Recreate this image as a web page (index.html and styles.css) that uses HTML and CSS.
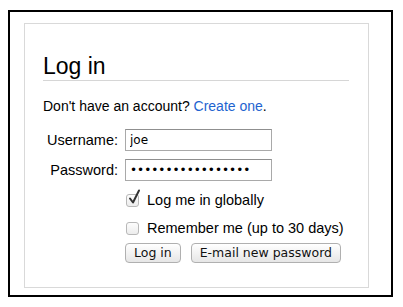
FILE: index.html
```html
<!DOCTYPE html>
<html>
<head>
<meta charset="utf-8">
<link rel="stylesheet" href="styles.css">
</head>
<body>
<div class="frame">
  <div class="panel">
    <h1 class="title">Log in</h1>
    <p class="intro">Don't have an account? <a class="link" href="#">Create one</a>.</p>
    <form class="form">
      <label class="label" for="u">Username:</label>
      <input class="field" id="u" type="text" value="joe">
      <label class="label" for="p">Password:</label>
      <input class="field" id="p" type="password" value="abcdefghijklmnopq">
      <div class="check-row first">
        <span class="box"><svg class="tick" viewBox="0 0 14 16" width="14" height="16"><path d="M3 9.5 L6 13.5 L12 1.5" fill="none" stroke="#333" stroke-width="2" stroke-linecap="round" stroke-linejoin="round"/></svg></span>
        <span class="check-text">Log me in globally</span>
      </div>
      <div class="check-row">
        <span class="box"></span>
        <span class="check-text">Remember me (up to 30 days)</span>
      </div>
      <div class="buttons">
        <button class="btn" type="button">Log in</button>
        <button class="btn" type="button">E-mail new password</button>
      </div>
    </form>
  </div>
</div>
</body>
</html>
```

FILE: styles.css
```css
html, body {
  margin: 0;
  padding: 0;
  background: #fff;
}
body {
  padding: 10px 0 0 8px;
  font-family: "Liberation Sans", Arial, sans-serif;
  color: #000;
}
.frame {
  box-sizing: border-box;
  width: 385px;
  height: 287px;
  border: 2px solid #000;
  padding: 11px 0 0 14px;
}
.panel {
  box-sizing: border-box;
  width: 345px;
  height: 265px;
  border: 1px solid #d9d9d9;
  padding: 29px 19px 0 18px;
}
.title {
  margin: 0;
  font-size: 23px;
  font-weight: normal;
  line-height: 26px;
  padding-bottom: 1px;
  border-bottom: 1px solid #d6d6d6;
}
.intro {
  margin: 16px 0 0;
  font-size: 14px;
  line-height: 18px;
}
.link {
  color: #1e63cf;
  text-decoration: none;
}
.form {
  margin-top: 14px;
  display: grid;
  grid-template-columns: 75px 1fr;
  column-gap: 7px;
  row-gap: 8px;
  align-items: center;
}
.label {
  font-size: 14.5px;
  text-align: right;
}
.field {
  box-sizing: border-box;
  width: 147px;
  height: 22px;
  margin: 0;
  border: 1px solid #a9a9a9;
  border-top-color: #8f8f8f;
  padding: 0 4px;
  font-family: "DejaVu Sans", sans-serif;
  font-size: 12px;
  color: #000;
  outline: none;
}
.check-row {
  grid-column: 2;
  display: flex;
  align-items: center;
  gap: 8px;
  height: 20px;
  white-space: nowrap;
  margin-left: 1px;
}
.check-row.first {
  margin-top: 1px;
}
.box {
  position: relative;
  box-sizing: border-box;
  width: 13px;
  height: 13px;
  border: 1px solid #b8b8b8;
  border-radius: 3px;
  background: linear-gradient(#fdfdfd, #ececec);
  flex: none;
}
.tick {
  position: absolute;
  left: 0;
  top: -6px;
}
.check-text {
  font-size: 14.5px;
}
.buttons {
  grid-column: 2;
  display: flex;
  gap: 10px;
  margin-top: -3px;
}
.btn {
  height: 20px;
  margin: 0;
  padding: 0 8px;
  border: 1px solid #b0b0b0;
  border-radius: 4px;
  background: linear-gradient(#ffffff, #f0f0f0 60%, #e6e6e6);
  font-family: "DejaVu Sans", sans-serif;
  font-size: 12.5px;
  color: #111;
  line-height: 18px;
}
```
